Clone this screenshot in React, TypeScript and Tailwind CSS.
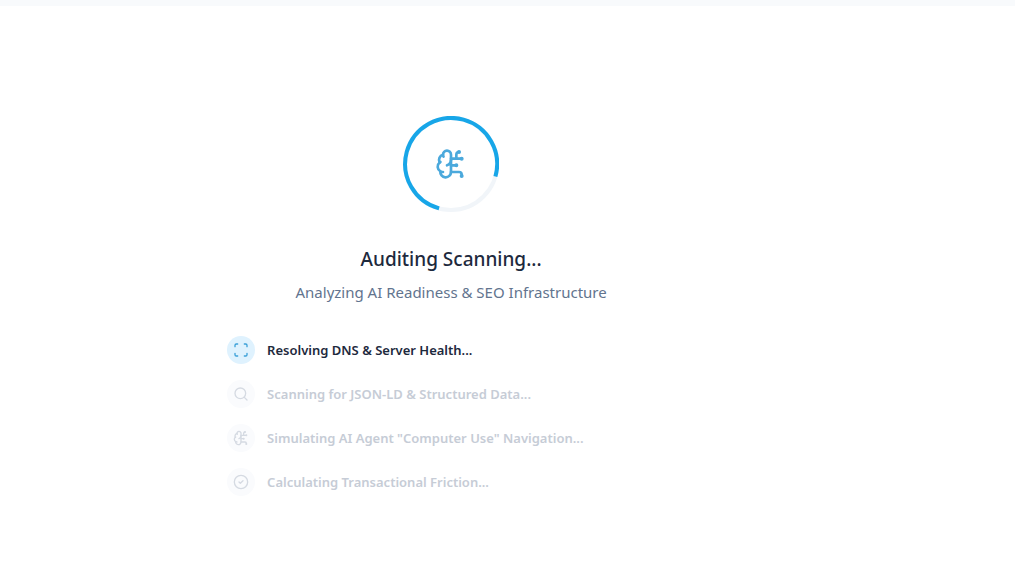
import { BrainCircuit, CircleCheck, Scan, Search } from "lucide-react";

const steps = [
  { label: "Resolving DNS & Server Health...", Icon: Scan, active: true },
  { label: "Scanning for JSON-LD & Structured Data...", Icon: Search, active: false },
  { label: 'Simulating AI Agent "Computer Use" Navigation...', Icon: BrainCircuit, active: false },
  { label: "Calculating Transactional Friction...", Icon: CircleCheck, active: false },
];

function Spinner() {
  return (
    <div className="grid size-24 place-items-center">
      <svg viewBox="0 0 96 96" className="col-start-1 row-start-1 size-24" fill="none" strokeWidth="4" aria-hidden="true">
        <circle cx="48" cy="48" r="46" stroke="#f1f5f9" />
        <path d="M36.1 92.4A46 46 0 1 1 92.4 60.5" stroke="#17a6e8" />
      </svg>
      <BrainCircuit className="col-start-1 row-start-1 size-8 text-[#4ba9dc]" aria-hidden="true" />
    </div>
  );
}

export default function App() {
  return (
    <div className="min-h-screen bg-white font-['Noto_Sans',sans-serif]">
      <div className="h-1.5 bg-slate-50" />
      <main className="flex w-8/9 flex-col items-center pt-[110px]">
        <Spinner />
        <h1 className="mt-8 text-[19px] leading-[30px] font-medium text-slate-800">Auditing Scanning...</h1>
        <p className="mt-0.5 text-[15px] leading-8 text-slate-500">Analyzing AI Readiness &amp; SEO Infrastructure</p>
        <ul className="mt-7 flex w-full max-w-md flex-col gap-4">
          {steps.map(({ label, Icon, active }) => (
            <li key={label} className="flex items-center gap-3">
              <span className={active ? "grid size-7 place-items-center rounded-full bg-sky-100 text-[#3ba0d8]" : "grid size-7 place-items-center rounded-full bg-[#fafbfd] text-[#d5dae2]"}>
                <Icon className="size-4" aria-hidden="true" />
              </span>
              <span className={active ? "text-[13px] leading-5 font-semibold text-slate-800" : "text-[13px] leading-5 font-semibold text-[#c6ccd6]"}>{label}</span>
            </li>
          ))}
        </ul>
      </main>
    </div>
  );
}
